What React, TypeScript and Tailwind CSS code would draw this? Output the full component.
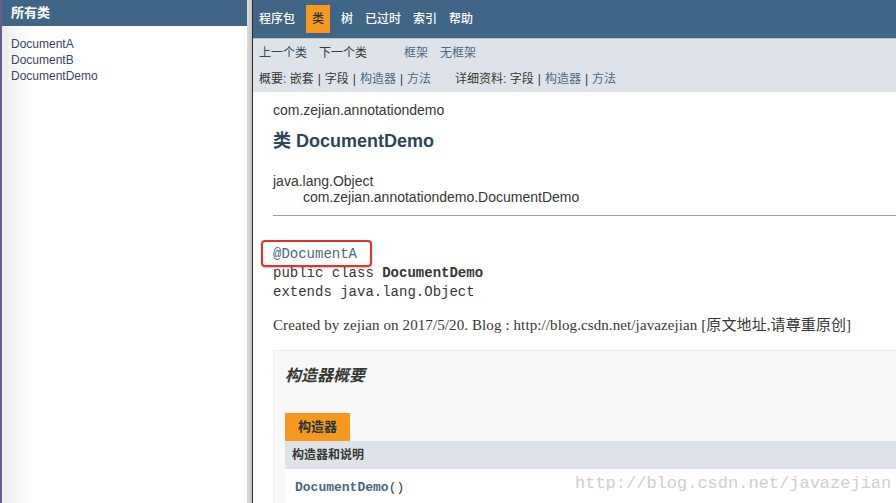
import React from 'react';

const sans = 'font-["Liberation_Sans","Noto_Sans_CJK_SC",sans-serif]';

// top navigation cells of the class frame
const topNav = [
  { label: '程序包', cls: 'ml-0', active: false },
  { label: '类', cls: 'ml-[5px]', active: true },
  { label: '树', cls: 'ml-[5px]', active: false },
  { label: '已过时', cls: 'ml-0', active: false },
  { label: '索引', cls: 'ml-0', active: false },
  { label: '帮助', cls: 'ml-0', active: false },
];

const classes = ['DocumentA', 'DocumentB', 'DocumentDemo'];

const Sep = () => <span className="mx-[4px]">|</span>;

const App = () => {
  return (
    <div className={`relative flex h-[503px] w-[896px] overflow-hidden bg-white text-[#353833] ${sans}`}>
      {/* all classes frame */}
      <aside className="flex w-[247px] shrink-0 flex-col border-l-2 border-[#6a5d8c]">
        <div className="flex h-[26px] items-center bg-[#3f6686] px-[9px] text-[13px] font-bold text-white">
          所有类
        </div>
        <ul className="flex-1 bg-[linear-gradient(to_right,#ececec,#ffffff_30px)] px-[9px] pt-[10px] text-[12px] leading-[16px] text-[#37455a]">
          {classes.map((c) => (
            <li key={c}>{c}</li>
          ))}
        </ul>
      </aside>

      {/* frame divider */}
      <div className="w-[6px] shrink-0 border-r border-[#2b2b2b] bg-[linear-gradient(to_right,#dcdcdc,#c4c4c4)]" />

      {/* class frame */}
      <main className="flex min-w-0 flex-1 flex-col">
        <nav className="flex h-[38px] items-center bg-[#3f6686] text-[12px] font-medium text-white">
          {topNav.map((item) => (
            <span
              key={item.label}
              className={`${item.cls} flex h-[28px] items-center px-[6px] ${item.active ? 'bg-[#f8981d] text-[#253441]' : ''}`}
            >
              {item.label}
            </span>
          ))}
        </nav>

        <div className="h-[54px] border-t border-[#b7c3cf] bg-[#dee3e9] pl-[6px] pt-[1px] text-[12px]">
          <div className="flex h-[26px] items-center">
            <span className="text-[#33485c]">上一个类</span>
            <span className="ml-[12px]">下一个类</span>
            <span className="ml-[37px] text-[#4a6782]">框架</span>
            <span className="ml-[12px] text-[#4a6782]">无框架</span>
          </div>
          <div className="flex h-[26px] items-center">
            <span>
              概要: 嵌套<Sep />字段<Sep /><span className="text-[#4a6782]">构造器</span>
              <Sep />
              <span className="text-[#4a6782]">方法</span>
            </span>
            <span className="ml-[24px]">
              详细资料: 字段<Sep /><span className="text-[#4a6782]">构造器</span>
              <Sep />
              <span className="text-[#4a6782]">方法</span>
            </span>
          </div>
        </div>

        <div className="flex-1 overflow-hidden pl-[20px]">
          <div className="mt-[9px] text-[14px] leading-[18px]">com.zejian.annotationdemo</div>
          <h2 className="mt-[11px] text-[18px] font-bold leading-[22px] text-[#2c4557]">类 DocumentDemo</h2>

          <div className="mt-[21px] text-[14px] leading-[16px]">
            <div>java.lang.Object</div>
            <div className="pl-[30px]">com.zejian.annotationdemo.DocumentDemo</div>
          </div>
          <hr className="mt-[10px] border-t border-[#9c9c9c]" />

          <pre className='mt-[29px] font-["Liberation_Mono",monospace] text-[14px] leading-[19px]'>
            <span className="relative inline-block text-[#4a6782]">
              @DocumentA
              <span className="absolute -left-[12px] -top-[5px] h-[27px] w-[111px] rounded-[4px] border-2 border-[#e8302b] shadow-[0_1px_2px_rgba(0,0,0,0.25)]" />
            </span>
            {'\n'}public class <b>DocumentDemo</b>
            {'\n'}extends java.lang.Object
          </pre>

          <p className='mt-[14px] font-["Liberation_Serif","Noto_Sans_CJK_SC",serif] text-[15px] leading-[18px] tracking-[0.1px]'>
            Created by zejian on 2017/5/20. Blog : http://blog.csdn.net/javazejian [原文地址,请尊重原创]
          </p>

          {/* constructor summary */}
          <section className="mt-[16px] w-[700px] border border-[#ededed] bg-[#f8f8f8] pl-[11px] pt-[15px]">
            <h3 className="text-[16px] font-bold italic leading-[20px]">构造器概要</h3>
            <div className="mt-[27px] flex h-[28px] w-[65px] items-center justify-center bg-[#f8981d] text-[13px] font-bold text-[#253441]">
              构造器
            </div>
            <div className="flex h-[28px] items-center bg-[#dee3e9] pl-[7px] text-[12px] font-bold">构造器和说明</div>
            <div className='flex h-[38px] items-center bg-white pl-[10px] font-["Liberation_Mono",monospace] text-[13px]'>
              <span className="font-bold text-[#4a6782]">DocumentDemo</span>
              <span>()</span>
            </div>
          </section>
        </div>
      </main>

      {/* blog watermark */}
      <div className='pointer-events-none absolute left-[575px] top-[472px] font-["Liberation_Mono",monospace] text-[17px] leading-[24px] text-[#cfcfcf]'>
        http://blog.csdn.net/javazejian
      </div>
    </div>
  );
};

export default App;
